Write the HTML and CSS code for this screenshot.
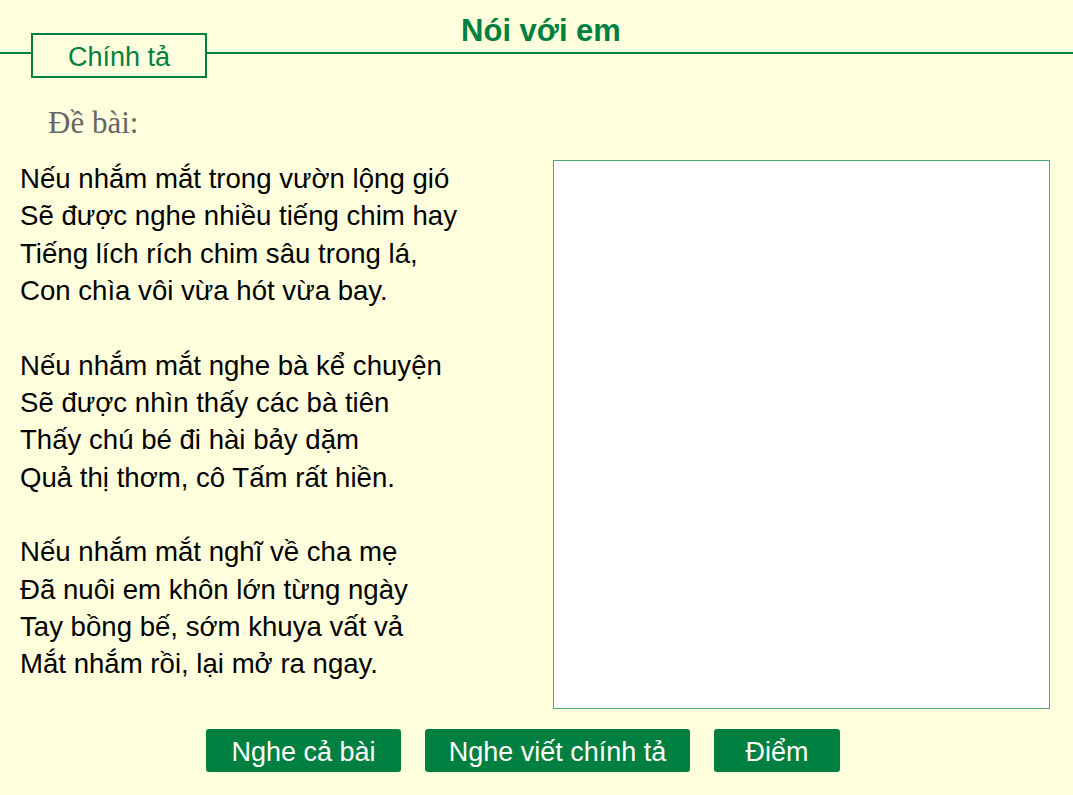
FILE: index.html
```html
<!DOCTYPE html>
<html lang="vi">
<head>
<meta charset="utf-8">
<title>Nói với em</title>
<link rel="stylesheet" href="styles.css">
</head>
<body>
<div class="page">
  <header class="header">
    <div class="rule"></div>
    <div class="tab">Chính tả</div>
    <h1 class="title">Nói với em</h1>
  </header>
  <div class="label">Đề bài:</div>
  <main class="main">
    <div class="poem">
      <div class="line">Nếu nhắm mắt trong vườn lộng gió</div>
      <div class="line">Sẽ được nghe nhiều tiếng chim hay</div>
      <div class="line">Tiếng lích rích chim sâu trong lá,</div>
      <div class="line">Con chìa vôi vừa hót vừa bay.</div>
      <div class="line blank">&nbsp;</div>
      <div class="line">Nếu nhắm mắt nghe bà kể chuyện</div>
      <div class="line">Sẽ được nhìn thấy các bà tiên</div>
      <div class="line">Thấy chú bé đi hài bảy dặm</div>
      <div class="line">Quả thị thơm, cô Tấm rất hiền.</div>
      <div class="line blank">&nbsp;</div>
      <div class="line">Nếu nhắm mắt nghĩ về cha mẹ</div>
      <div class="line">Đã nuôi em khôn lớn từng ngày</div>
      <div class="line">Tay bồng bế, sớm khuya vất vả</div>
      <div class="line">Mắt nhắm rồi, lại mở ra ngay.</div>
    </div>
    <div class="answer"></div>
  </main>
  <div class="buttons">
    <button class="btn btn-all">Nghe cả bài</button>
    <button class="btn btn-dictate">Nghe viết chính tả</button>
    <button class="btn btn-score">Điểm</button>
  </div>
</div>
</body>
</html>
```

FILE: styles.css
```css
html, body {
  margin: 0;
  padding: 0;
  background: #ffffdd;
}
body {
  width: 1073px;
  height: 795px;
  overflow: hidden;
  font-family: "Liberation Sans", Arial, sans-serif;
}
.page {
  display: flex;
  flex-direction: column;
}
.header {
  display: grid;
  height: 78px;
}
.rule {
  grid-area: 1 / 1;
  align-self: start;
  margin-top: 52px;
  height: 2px;
  background: #008040;
}
.tab {
  grid-area: 1 / 1;
  justify-self: start;
  align-self: start;
  margin-top: 33px;
  margin-left: 31px;
  width: 176px;
  height: 45px;
  box-sizing: border-box;
  border: 2px solid #008040;
  background: #ffffdd;
  color: #008040;
  font-size: 27px;
  line-height: 38px;
  padding-top: 3px;
  text-align: center;
}
.title {
  grid-area: 1 / 1;
  justify-self: center;
  align-self: start;
  margin: 15px 0 0 9px;
  font-size: 31px;
  line-height: 31px;
  font-weight: bold;
  color: #008040;
}
.label {
  margin: 29px 0 0 48px;
  font-family: "Liberation Serif", "Times New Roman", serif;
  font-size: 31px;
  line-height: 31px;
  color: #666666;
}
.main {
  display: flex;
  margin-top: 22px;
  height: 549px;
}
.poem {
  width: 553px;
  padding-left: 20px;
  box-sizing: border-box;
  font-size: 27.6px;
  line-height: 37.33px;
  color: #000;
}
.answer {
  width: 497px;
  height: 549px;
  box-sizing: border-box;
  border: 1px solid #4da673;
  background: #ffffff;
}
.buttons {
  display: flex;
  margin-top: 20px;
  padding-left: 206px;
  gap: 24px;
}
.btn {
  height: 43px;
  box-sizing: border-box;
  border: none;
  border-radius: 3px;
  background: #008040;
  color: #ffffff;
  font-family: "Liberation Sans", Arial, sans-serif;
  font-size: 27px;
  line-height: 40px;
  padding: 3px 0 0 0;
  text-align: center;
}
.btn-all { width: 195px; }
.btn-dictate { width: 265px; }
.btn-score { width: 126px; }
```
